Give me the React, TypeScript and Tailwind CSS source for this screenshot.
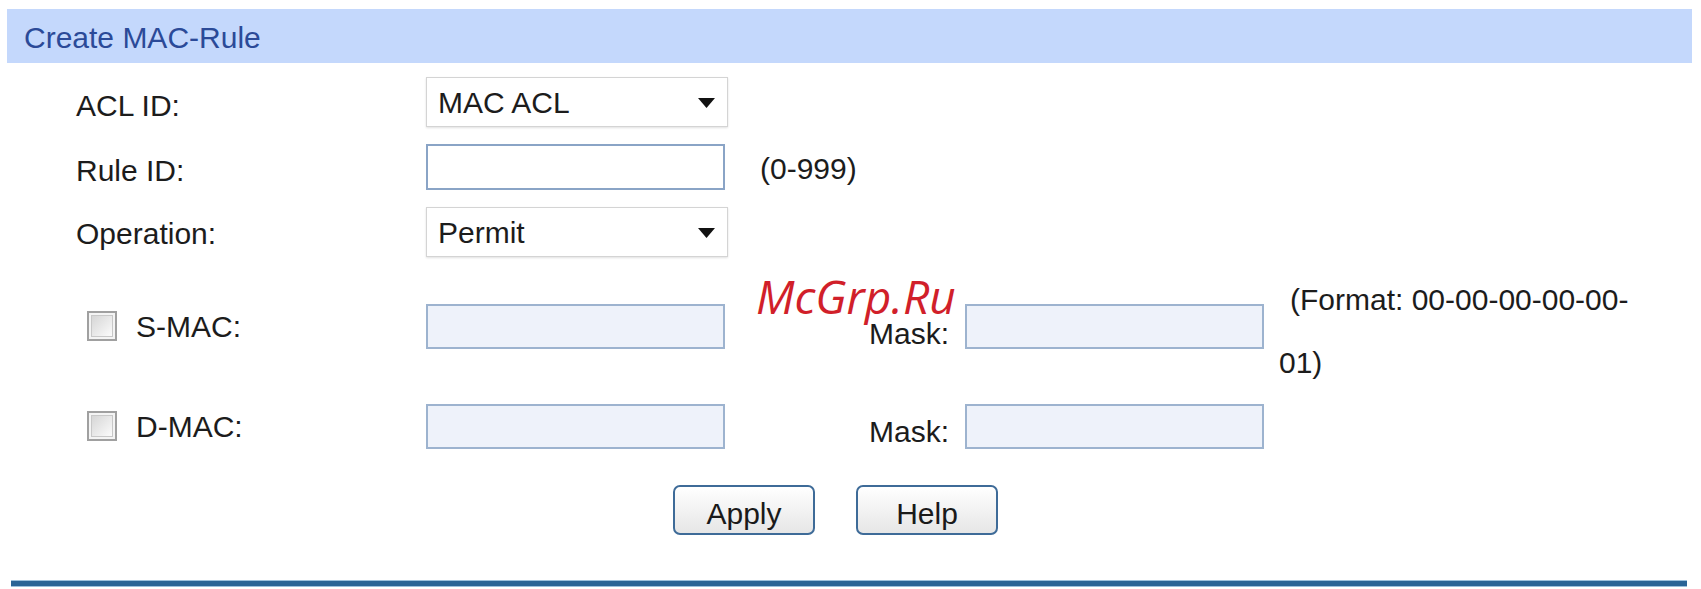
import type { ReactNode } from "react";

// MAC ACL ルール作成フォーム

const font = { fontFamily: '"Liberation Sans", Arial, sans-serif' };

function Select({ value }: { value: string }) {
  return (
    <div className="relative flex h-[50px] w-[302px] items-center border border-[#d4d4d4] bg-white pl-[11px] shadow-[0_1px_2px_rgba(0,0,0,0.12)]">
      <span>{value}</span>
      <svg
        className="absolute right-[12px] top-[20px]"
        width="17"
        height="10"
        viewBox="0 0 17 10"
      >
        <polygon points="0,0 17,0 8.5,10" fill="#111" />
      </svg>
    </div>
  );
}

function TextBox({ disabled }: { disabled?: boolean }) {
  return (
    <input
      type="text"
      disabled={disabled}
      className={
        disabled
          ? "h-[45px] w-[299px] border-2 border-[#9db3cf] bg-[#eef2fa] outline-none"
          : "h-[46px] w-[299px] border-2 border-[#8aa4c6] bg-white outline-none"
      }
    />
  );
}

function CheckBox() {
  return (
    <div className="flex h-[30px] w-[30px] items-center justify-center border-2 border-[#a0a0a0] bg-[#f4f4f4]">
      <div className="h-[22px] w-[22px] border border-[#c8c8c8] bg-gradient-to-br from-[#d6d6d6] to-[#fbfbfb]" />
    </div>
  );
}

function Button({ children }: { children: ReactNode }) {
  return (
    <button className="flex h-[50px] w-[142px] items-center justify-center rounded-[7px] border-2 border-[#3e6b98] bg-gradient-to-b from-white to-[#e6e6e6] pt-[6px] text-[#1a1a1a]">
      {children}
    </button>
  );
}

export default function App() {
  return (
    <div
      className="relative min-h-[589px] w-[1701px] bg-white pt-[9px] text-[30px] text-[#1c1c1c]"
      style={font}
    >
      {/* ヘッダー */}
      <div className="ml-[7px] mr-[9px] flex h-[54px] items-center bg-[#c4d8fc] pl-[17px] pt-[2px] text-[#2b4a98]">
        Create MAC-Rule
      </div>

      {/* ACL ID */}
      <div className="mt-[14px] flex h-[50px] items-center">
        <div className="w-[426px] pl-[76px] pt-[6px]">ACL ID:</div>
        <Select value="MAC ACL" />
      </div>

      {/* Rule ID */}
      <div className="mt-[17px] flex h-[46px] items-center">
        <div className="w-[426px] pl-[76px] pt-[7px]">Rule ID:</div>
        <TextBox />
        <span className="ml-[35px] pt-[2px]">(0-999)</span>
      </div>

      {/* Operation */}
      <div className="mt-[17px] flex h-[50px] items-center">
        <div className="w-[426px] pl-[76px] pt-[3px]">Operation:</div>
        <Select value="Permit" />
      </div>

      {/* S-MAC */}
      <div className="mt-[6px] flex h-[126px] items-center">
        <div className="flex w-[426px] items-center pl-[87px]">
          <CheckBox />
          <span className="ml-[19px]">S-MAC:</span>
        </div>
        <TextBox disabled />
        <div className="flex w-[240px] justify-end pr-[16px] pt-[14px]">Mask:</div>
        <TextBox disabled />
        <div className="ml-[15px] pt-[9px] leading-[63px]">
          <div className="pl-[11px]">(Format: 00-00-00-00-00-</div>
          <div>01)</div>
        </div>
      </div>

      {/* D-MAC */}
      <div className="flex h-[74px] items-center">
        <div className="flex w-[426px] items-center pl-[87px]">
          <CheckBox />
          <span className="ml-[19px]">D-MAC:</span>
        </div>
        <TextBox disabled />
        <div className="flex w-[240px] justify-end pr-[16px] pt-[10px]">Mask:</div>
        <TextBox disabled />
      </div>

      {/* ボタン */}
      <div className="mt-[22px] flex h-[50px] gap-[41px] pl-[673px]">
        <Button>Apply</Button>
        <Button>Help</Button>
      </div>

      {/* 下線 */}
      <div className="ml-[11px] mr-[14px] mt-[45px] h-[7px] border-y border-[#9cc0dc] bg-[#2a6496]" />

      {/* 透かし */}
      <div
        className="absolute left-[756px] top-[262px] text-[46px] italic text-[#d11f2a]"
        style={{ fontFamily: '"Open Sans", "DejaVu Sans", sans-serif' }}
      >
        McGrp.Ru
      </div>
    </div>
  );
}
